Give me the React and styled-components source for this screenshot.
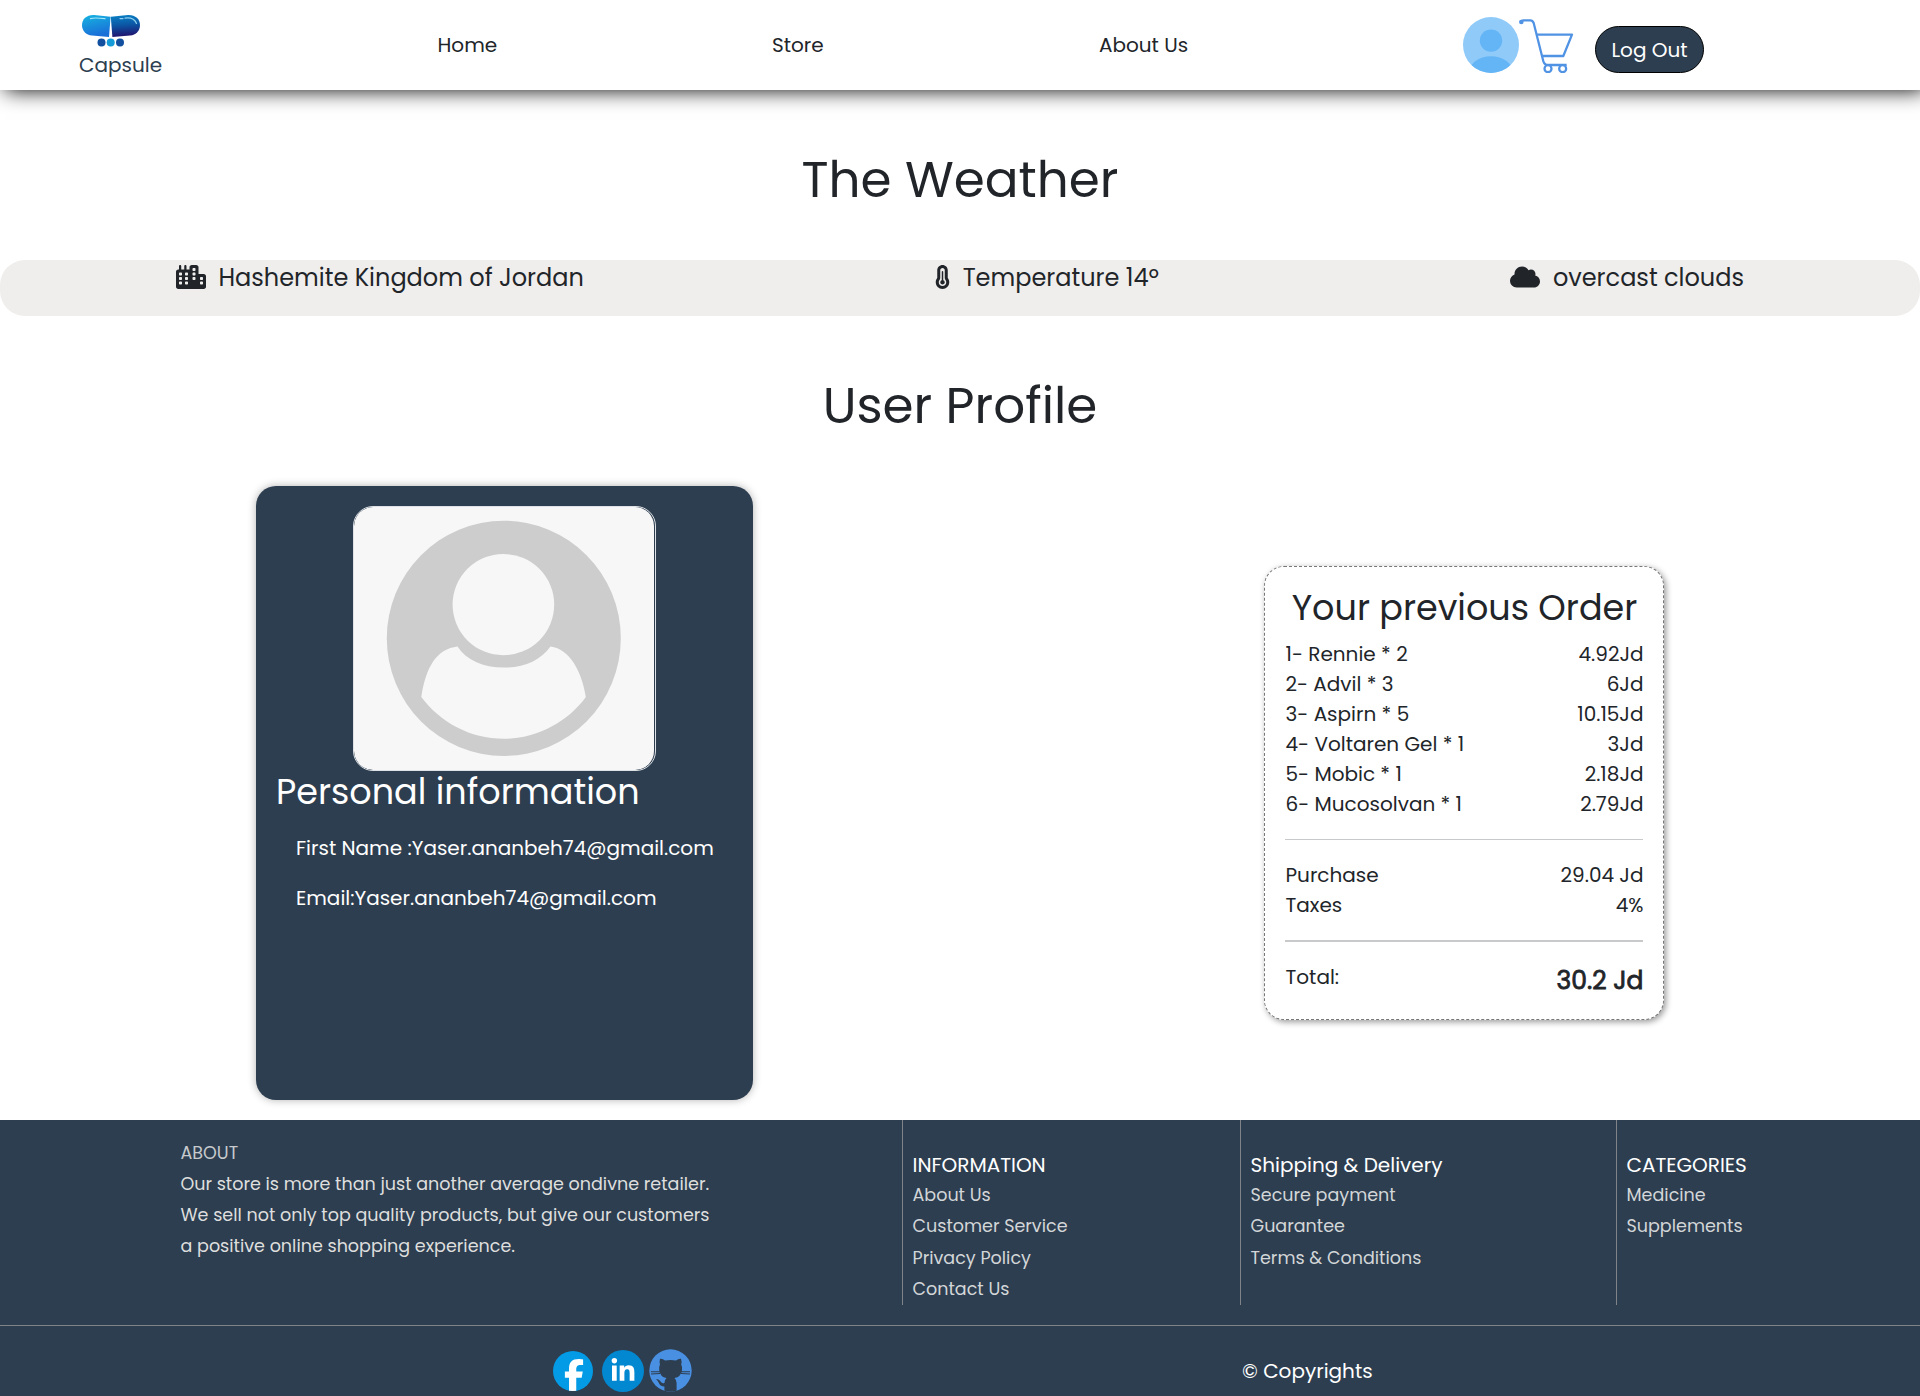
import React from "react";
import styled, { createGlobalStyle } from "styled-components";
import { FaCity, FaTemperatureThreeQuarters, FaCloud, FaFacebookF, FaLinkedinIn } from "react-icons/fa6";

const navy = "#2d3e50";
const ink = "#212529";

const GlobalStyle = createGlobalStyle`
  *, *::before, *::after { box-sizing: border-box; }
  body {
    margin: 0;
    background: #fff;
    color: ${ink};
    font-family: Poppins, Inter, "Open Sans", sans-serif;
    font-size: 20px;
    line-height: 30px;
    overflow: hidden;
  }
  h1, h2, h3, p, ul { margin: 0; padding: 0; font-weight: inherit; }
  ul { list-style: none; }
  a { color: inherit; text-decoration: none; }
  svg { display: block; flex: none; }
`;

/* Header */
const Header = styled.header`
  display: grid;
  grid-template-columns: 437.5px 334.5px 327px 364px 1fr;
  height: 90px;
  background: #fff;
  box-shadow: 5px 0 20px #000;
`;
const Brand = styled.a`
  display: flex;
  flex-direction: column;
  padding: 14px 0 0 79px;
  color: #2d3e50;
`;
const BrandMark = styled.svg`
  width: 58px;
  height: 34px;
  margin: 0 0 2px 3px;
`;
const NavLink = styled.a`
  padding-top: 30px;
`;
const Actions = styled.div`
  display: flex;
  align-items: flex-start;
  padding-top: 17px;
`;
const LogOut = styled.button`
  width: 109px;
  height: 47px;
  margin: 9px 0 0 21px;
  padding: 0;
  border: 1px solid #000;
  border-radius: 25px;
  background: ${navy};
  color: #fff;
  font: inherit;
`;

/* Weather */
const PageTitle = styled.h1`
  padding-top: 60px;
  text-align: center;
  font-size: 50px;
  line-height: 60px;
`;
const WeatherBar = styled.section`
  display: flex;
  justify-content: space-between;
  height: 56px;
  margin-top: 50px;
  padding: 0 176px;
  border-radius: 25px;
  background: #f0eeed;
  font-size: 24px;
  line-height: 36px;
`;
const WeatherItem = styled.div`
  display: flex;
  align-items: flex-start;
  gap: 12.5px;
  svg { margin-top: 5px; height: 24px; width: ${(p) => p.$icon}px; }
`;

/* Profile */
const Profile = styled.main`
  display: flex;
  justify-content: space-between;
  align-items: center;
  margin-top: 50px;
  padding: 0 256px;
`;
const PersonCard = styled.section`
  width: 497px;
  height: 614px;
  padding: 20px;
  border-radius: 20px;
  background: ${navy};
  color: #fff;
  box-shadow: 0 0 8px rgba(0, 0, 0, 0.3);
`;
const Portrait = styled.div`
  width: 303px;
  height: 265px;
  margin: 0 auto;
  border-radius: 20px;
  overflow: hidden;
  border: 1px solid #dee2e6;
`;
const AvatarImage = styled.svg`
  width: 300px;
  height: 263px;
  border-radius: 19px;
  background: #f7f7f7;
`;
const PersonTitle = styled.h2`
  font-size: 35px;
  line-height: 42px;
  margin-bottom: 20px;
`;
const Field = styled.p`
  padding-left: 20px;
  margin-bottom: 20px;
`;
const OrderCard = styled.section`
  width: 400px;
  padding: 20px;
  border: 1px dashed #777;
  border-radius: 20px;
  background: #fff;
  box-shadow: 2px 2px 6px rgba(0, 0, 0, 0.4);
`;
const OrderTitle = styled.h2`
  margin-bottom: 10px;
  padding-left: 1px;
  text-align: center;
  font-size: 35px;
  line-height: 42px;
`;
const Line = styled.div`
  display: flex;
  justify-content: space-between;
  margin: 0 -0.5px 0 0.5px;
`;
const Divider = styled.div`
  height: ${(p) => p.$h}px;
  margin: 20px 0;
  background: #c8c9ca;
`;
const Total = styled.strong`
  font-size: 25px;
  line-height: 37px;
  font-weight: 400;
  -webkit-text-stroke: 0.8px ${ink};
`;

/* Footer */
const Footer = styled.footer`
  height: 276px;
  margin-top: 20px;
  background: ${navy};
  color: #fff;
`;
const FooterGrid = styled.div`
  display: grid;
  grid-template-columns: 902px 338px 376px 1fr;
  height: 185px;
`;
const About = styled.div`
  padding: 18px 0 0 180.5px;
  font-size: 17.55px;
  line-height: 31px;
  color: #dedede;
  p { width: 540px; }
`;
const AboutTitle = styled.h3`
  margin-bottom: 1px;
  font-size: 17.55px;
  line-height: 30px;
  color: #c6cacd;
`;
const Column = styled.nav`
  padding: 31px 0 0 9.5px;
  border-left: 1px solid #7f8488;
  font-size: 17.55px;
  line-height: 31.25px;
  color: #d3d6d8;
`;
const ColumnTitle = styled.h3`
  margin-bottom: 1px;
  font-size: 20px;
  line-height: 28px;
  color: #fff;
`;
const FooterBottom = styled.div`
  display: flex;
  margin-top: 20px;
  border-top: 1px solid #7f8488;
`;
const Socials = styled.div`
  display: flex;
  align-items: center;
  width: 1242px;
  padding: 23px 0 0 553px;
`;
const Disc = styled.a`
  display: flex;
  align-items: center;
  justify-content: center;
  width: ${(p) => p.$d}px;
  height: ${(p) => p.$d}px;
  margin-right: ${(p) => p.$gap}px;
  border-radius: 50%;
  overflow: hidden;
  background: ${(p) => p.$bg};
  color: #fff;
`;
const FacebookMark = styled(FaFacebookF)`
  width: 20px;
  height: 32px;
  margin: 8px 0 0 1px;
`;
const Copyright = styled.p`
  padding-top: 30px;
`;

const order = [
  ["1- Rennie * 2", "4.92Jd"],
  ["2- Advil * 3", "6Jd"],
  ["3- Aspirn * 5", "10.15Jd"],
  ["4- Voltaren Gel * 1", "3Jd"],
  ["5- Mobic * 1", "2.18Jd"],
  ["6- Mucosolvan * 1", "2.79Jd"],
];

const columns = [
  { title: "INFORMATION", links: ["About Us", "Customer Service", "Privacy Policy", "Contact Us"] },
  { title: "Shipping & Delivery", links: ["Secure payment", "Guarantee", "Terms & Conditions"] },
  { title: "CATEGORIES", links: ["Medicine", "Supplements"] },
];

const CapsuleLogo = () => (
  <BrandMark viewBox="0 0 58 34">
    <defs>
      <linearGradient id="capL" x1="0" y1="0" x2="0.3" y2="1">
        <stop offset="0" stopColor="#16b4e0" />
        <stop offset="1" stopColor="#1a6fd8" />
      </linearGradient>
      <linearGradient id="capR" x1="0" y1="0" x2="0.1" y2="1">
        <stop offset="0" stopColor="#0a83c6" />
        <stop offset="0.5" stopColor="#0b55a4" />
        <stop offset="1" stopColor="#20146e" />
      </linearGradient>
    </defs>
    <path d="M28.6 2.8 L12 1 C5 .6 0 5 0 11 C0 17 4 21 10 21.6 L27 23 Z" fill="url(#capL)" />
    <path d="M28.8 2.8 L46 1 C53 .6 58 5 58 11 C58 17 54 21 48 21.6 L30.4 23 Z" fill="url(#capR)" />
    <path d="M8.5 4.6 Q12 3.4 23 4.6" fill="none" stroke="#a5e6f7" strokeWidth="1.2" strokeLinecap="round" />
    <path d="M38 4.6 H41 M43 4.1 Q52 3 54.5 9.5" fill="none" stroke="#8fd0ee" strokeWidth="1.2" strokeLinecap="round" />
    <circle cx="19.5" cy="28.6" r="4" fill="#12509f" />
    <circle cx="28.7" cy="28.6" r="4" fill="#159bd8" />
    <circle cx="38" cy="28.6" r="4" fill="#12509f" />
  </BrandMark>
);

const UserIcon = () => (
  <svg width="56" height="56" viewBox="0 0 56 56">
    <clipPath id="userClip"><circle cx="28" cy="28" r="28" /></clipPath>
    <circle cx="28" cy="28" r="28" fill="#90caf9" />
    <circle cx="28" cy="23.6" r="11.2" fill="#64b5f6" />
    <ellipse cx="28" cy="55.5" rx="22" ry="16.2" fill="#64b5f6" clipPath="url(#userClip)" />
  </svg>
);

const CartIcon = () => (
  <svg width="55" height="56" viewBox="357 51 165 168" fill="none" stroke="#5092e4" strokeWidth="6.8" strokeLinejoin="round">
    <path d="M364 65 Q365 61 370 61 H391 Q398 61 401 69 L430 184 Q433 195 444 195 H500" />
    <path d="M411 104 H516 L490 168 H426" />
    <circle cx="364" cy="66" r="3.5" fill="#5092e4" />
    <circle cx="444" cy="206" r="10.5" fill="#fff" />
    <circle cx="488" cy="206" r="10.5" fill="#fff" />
  </svg>
);

const Avatar = () => (
  <AvatarImage viewBox="354 507 300 263">
    <ellipse cx="503.8" cy="638.3" rx="117" ry="117.6" fill="#cdcdcd" />
    <ellipse cx="503.4" cy="604.6" rx="50.8" ry="50.6" fill="#f7f7f7" />
    <path d="M421.3 697 C426 666 437 649 457.5 646.5 C466 660 483 667.6 503.8 667.6 C524 667.6 540 661 550.5 646.5 C570 649 582 672 585.8 697 C568 722 536 738.8 503.8 738.8 C470 738.8 440 722 421.3 697 Z" fill="#f7f7f7" />
  </AvatarImage>
);

const GithubIcon = () => (
  <svg width="43" height="43" viewBox="0 0 43 43">
    <clipPath id="ghClip"><circle cx="21.5" cy="21.5" r="21.2" /></clipPath>
    <circle cx="21.5" cy="21.5" r="21.2" fill="#4a90e2" />
    <g fill={navy} clipPath="url(#ghClip)">
      <path d="M11 9.8 Q13.5 9.2 16 11.6 Q21.7 10.2 27 11.6 Q29.7 9.2 32 9.8 Q33 12.5 32.2 15.4 Q33.6 18 33 21.5 Q31.8 28 25.5 29 Q27.6 31 27.6 34 V43 H15.4 V37.6 Q11 37.4 9.6 33.6 Q8.9 31.5 7 30.6 Q9.6 29.6 11.6 32.6 Q13 34.8 15.4 34 Q15.4 31 17.5 29 Q11.2 28 10.2 21.5 Q9.6 18 11 15.4 Q10.2 12.5 11 9.8Z" />
      <path d="M2 22.3 H11 V23.3 H2Z M2 24.6 L11 24 V25 L2 25.6Z M32 22.3 H41 V23.3 H32Z M32 24 L41 24.6 V25.6 L32 25Z" />
    </g>
  </svg>
);

export default function App() {
  return (
    <>
      <GlobalStyle />
      <Header>
        <Brand href="#"><CapsuleLogo />Capsule</Brand>
        <NavLink href="#">Home</NavLink>
        <NavLink href="#">Store</NavLink>
        <NavLink href="#">About Us</NavLink>
        <Actions>
          <UserIcon />
          <CartIcon />
          <LogOut>Log Out</LogOut>
        </Actions>
      </Header>

      <PageTitle>The Weather</PageTitle>
      <WeatherBar>
        <WeatherItem $icon={30}><FaCity />Hashemite Kingdom of Jordan</WeatherItem>
        <WeatherItem $icon={15}><FaTemperatureThreeQuarters />Temperature 14º</WeatherItem>
        <WeatherItem $icon={30}><FaCloud />overcast clouds</WeatherItem>
      </WeatherBar>

      <PageTitle>User Profile</PageTitle>
      <Profile>
        <PersonCard>
          <Portrait><Avatar /></Portrait>
          <PersonTitle>Personal information</PersonTitle>
          <Field>First Name :Yaser.ananbeh74@gmail.com</Field>
          <Field>Email:Yaser.ananbeh74@gmail.com</Field>
        </PersonCard>
        <OrderCard>
          <OrderTitle>Your previous Order</OrderTitle>
          {order.map(([name, price]) => (
            <Line key={name}><span>{name}</span><span>{price}</span></Line>
          ))}
          <Divider $h={1} />
          <Line><span>Purchase</span><span>29.04 Jd</span></Line>
          <Line><span>Taxes</span><span>4%</span></Line>
          <Divider $h={2} />
          <Line><span>Total:</span><Total>30.2 Jd</Total></Line>
        </OrderCard>
      </Profile>

      <Footer>
        <FooterGrid>
          <About>
            <AboutTitle>ABOUT</AboutTitle>
            <p>
              Our store is more than just another average ondivne retailer.
              We sell not only top quality products, but give our customers
              a positive online shopping experience.
            </p>
          </About>
          {columns.map(({ title, links }) => (
            <Column key={title}>
              <ColumnTitle>{title}</ColumnTitle>
              <ul>
                {links.map((text) => (
                  <li key={text}><a href="#">{text}</a></li>
                ))}
              </ul>
            </Column>
          ))}
        </FooterGrid>
        <FooterBottom>
          <Socials>
            <Disc href="#" $d={40} $gap={9} $bg="#039be5"><FacebookMark /></Disc>
            <Disc href="#" $d={42} $gap={5} $bg="#0288d1"><FaLinkedinIn size={26} /></Disc>
            <GithubIcon />
          </Socials>
          <Copyright>© Copyrights</Copyright>
        </FooterBottom>
      </Footer>
    </>
  );
}
